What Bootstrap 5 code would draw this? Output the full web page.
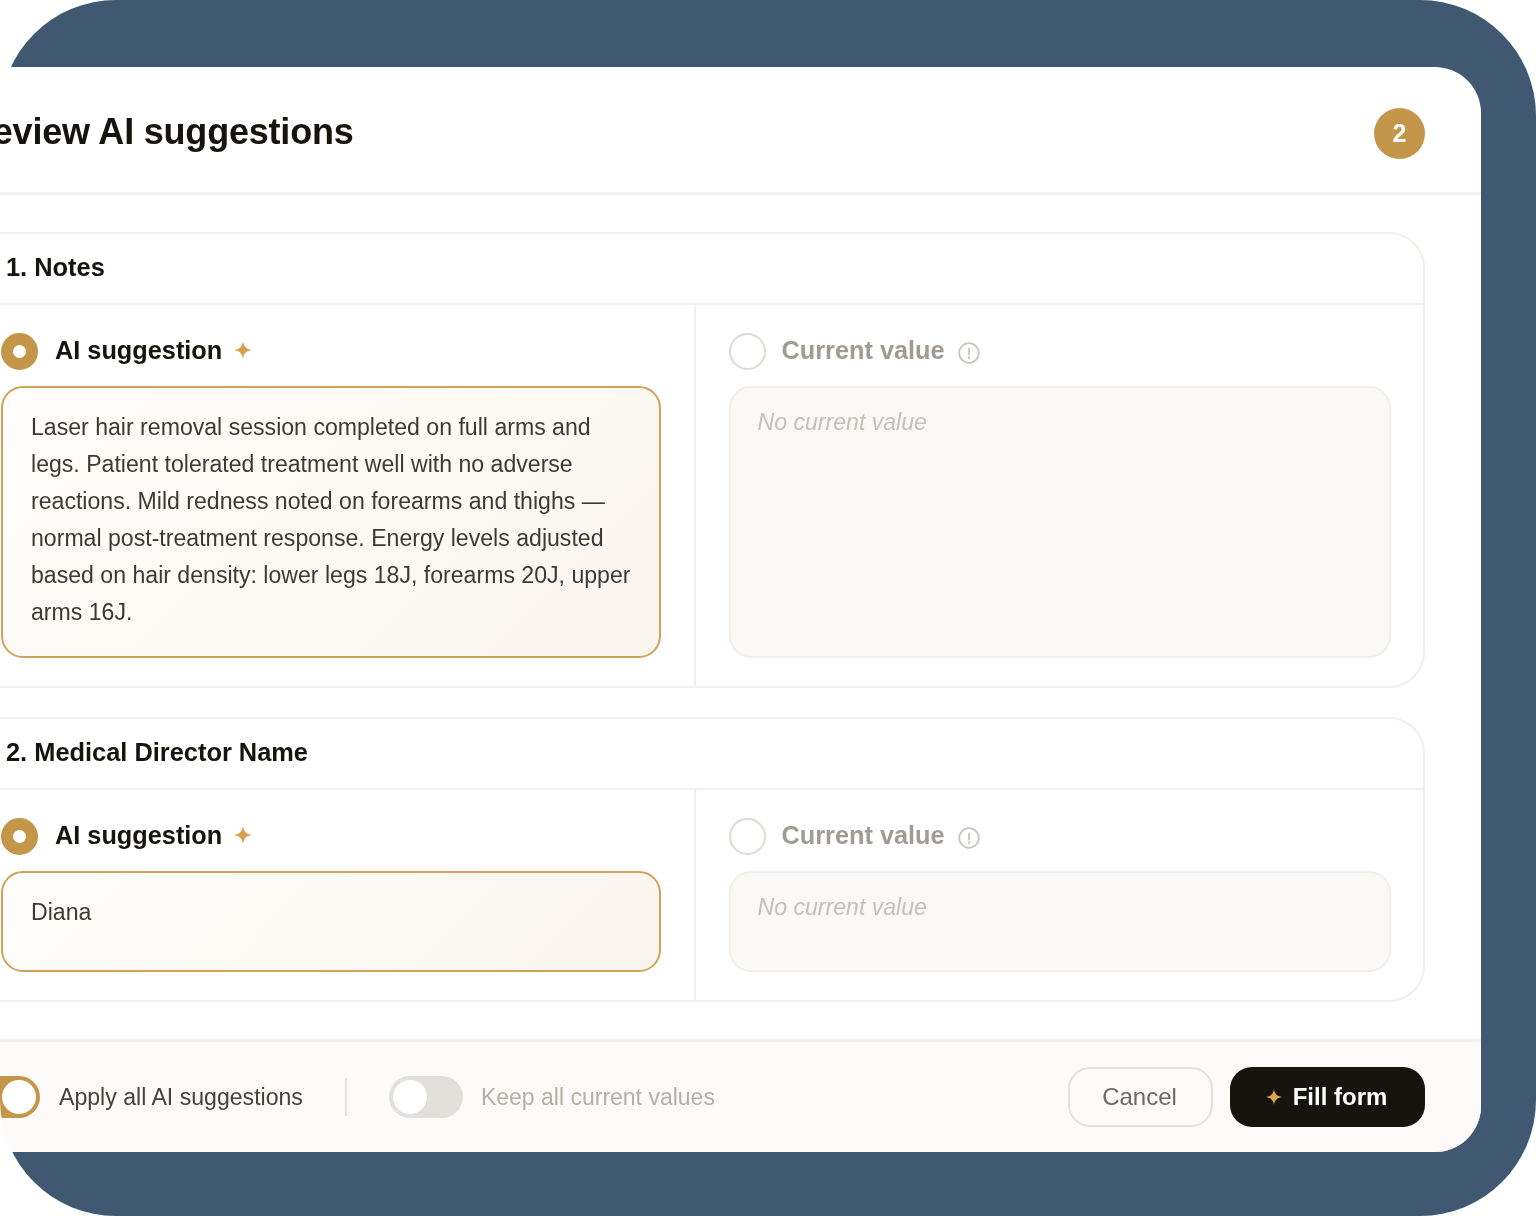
<!DOCTYPE html>
<html lang="en">
<head>
<meta charset="utf-8">
<title>Review AI suggestions</title>
<link href="https://cdn.jsdelivr.net/npm/bootstrap@5.3.0/dist/css/bootstrap.min.css" rel="stylesheet">
<style>
html,body{margin:0;background:#fff;overflow:hidden}
body{font-family:"Liberation Sans",Arial,sans-serif;color:#16140d}
.frame{width:1536px;height:1216px;background:#405872;clip-path:inset(0 round 116px);filter:blur(.55px);padding-top:67px}
.sheet{width:1571px;height:1085px;margin-left:-90px;background:#fff;border-radius:0 46px 46px 0;overflow:hidden;display:flex;flex-direction:column}
.sheet-head{height:128px;padding:0 56px;border-bottom:3px solid #f3f0eb}
.sheet-title{font-size:36px;font-weight:700;letter-spacing:-.2px;margin:4px 0 0 1px;color:#16140d;line-height:1}
.count{width:51px;height:51px;background:#c4964a;color:#fff;font-size:25px;font-weight:700;margin-top:8px}
.sheet-body{padding:37px 56px 0;gap:29px;flex:1 1 auto}
.sect{border:2.5px solid #f2efea;border-radius:36px;overflow:hidden;--bs-card-bg:#fff}
.sect-head{height:71px;padding:0 38px 2px;background:#fff;border-bottom:2.5px solid #f2efea;font-size:25.4px;font-weight:700}
.pane-a{flex:0 0 726px;width:726px;padding:28px 33px}
.pane-b{flex:1 1 0;padding:28px 32px 28px 32.5px;border-left:2.5px solid #f2efea}
.pick{height:37px;gap:17px;margin-bottom:16px;font-size:25.3px;font-weight:700}
.pick-off{gap:16px}
.pick-text{margin-top:-2px}
.dot{width:37px;height:37px;border-radius:50%;flex:none}
.dot-on{border:12.5px solid #c4964a;background:#fff}
.dot-off{border:2.5px solid #dedbd4;background:#fff}
.muted-label{color:#a09c94}
.spark{width:18px;height:18px;margin-left:-5px;margin-top:-3px;flex:none}
.tip{width:22px;height:22px;flex:none;margin-left:-3px;margin-top:2px}
.val{border-radius:22px;padding:21px 21px 20px 28px;font-size:23.1px;line-height:36.9px;color:#3d3a35}
.val-ai{border:2.5px solid #d1a25c;background:linear-gradient(135deg,#fefdfb,#faf6ee)}
.val-none{border:2.5px solid #f2efea;background:#faf9f7;color:#c4c1bb;font-style:italic;padding-top:16px;padding-left:27px}
.h-tall{height:272px}
.h-short{height:101px}
.sheet-foot{height:113px;flex:none;background:#fcfbf9;border-top:3px solid #f3f0eb;padding:0 56px}
.tog{width:74px;height:42px;border-radius:21px;flex:none;padding:4px}
.tog-on{background:#c4964a;justify-content:flex-end}
.tog-off{background:#e2e0da}
.knob{width:34px;height:34px;border-radius:50%;background:#fff;display:block}
.tog-lbl{font-size:23.1px;color:#45423c;margin-left:19px}
.tog-lbl-off{color:#b3b0a9;margin-left:18px;font-size:23px}
.vbar{width:2px;height:38px;background:#e4e1db;margin:0 42px 0 42px}
.act-row{gap:17px}
.act{height:60px;border-radius:22px;font-size:24px;padding:0;line-height:1}
.act-ghost{width:145px;background:transparent;border:2.5px solid #e4e1da;color:#6c6a63;padding-right:2px}
.act-fill{width:195px;background:#16140d;border:0;color:#fff;font-weight:700;gap:11px;padding-right:2px}
.act-fill svg{width:16px;height:16px}
</style>
</head>
<body>
<div class="frame">
  <div class="sheet">
    <div class="sheet-head d-flex align-items-center justify-content-between flex-shrink-0">
      <h1 class="sheet-title">Review AI suggestions</h1>
      <span class="count rounded-circle d-flex align-items-center justify-content-center">2</span>
    </div>
    <div class="sheet-body d-flex flex-column">
      <div class="card sect">
        <div class="sect-head d-flex align-items-center">1. Notes</div>
        <div class="d-flex">
          <div class="pane-a">
            <div class="pick d-flex align-items-center"><span class="dot dot-on"></span><span class="pick-text">AI suggestion</span>
              <svg class="spark" viewBox="0 0 20 20"><path fill="#d6a14e" d="M10 0c.9 6 3.600 9 10 10-6.400 1-9.100 4-10 10-.9-6-3.600-9-10-10 6.400-1 9.100-4 10-10z"/></svg></div>
            <div class="val val-ai h-tall">Laser hair removal session completed on full arms and legs. Patient tolerated treatment well with no adverse reactions. Mild redness noted on forearms and thighs — normal post-treatment response. Energy levels adjusted based on hair density: lower legs 18J, forearms 20J, upper arms 16J.</div>
          </div>
          <div class="pane-b">
            <div class="pick pick-off d-flex align-items-center"><span class="dot dot-off"></span><span class="muted-label pick-text">Current value</span>
              <svg class="tip" viewBox="0 0 22 22" fill="none" stroke="#c9c6bf" stroke-width="1.800"><circle cx="11" cy="11" r="9.800"/><path d="M11 6.500v6M11 15v1.200" stroke-linecap="round"/></svg></div>
            <div class="val val-none h-tall">No current value</div>
          </div>
        </div>
      </div>
      <div class="card sect">
        <div class="sect-head d-flex align-items-center">2. Medical Director Name</div>
        <div class="d-flex">
          <div class="pane-a">
            <div class="pick d-flex align-items-center"><span class="dot dot-on"></span><span class="pick-text">AI suggestion</span>
              <svg class="spark" viewBox="0 0 20 20"><path fill="#d6a14e" d="M10 0c.9 6 3.600 9 10 10-6.400 1-9.100 4-10 10-.9-6-3.600-9-10-10 6.400-1 9.100-4 10-10z"/></svg></div>
            <div class="val val-ai h-short">Diana</div>
          </div>
          <div class="pane-b">
            <div class="pick pick-off d-flex align-items-center"><span class="dot dot-off"></span><span class="muted-label pick-text">Current value</span>
              <svg class="tip" viewBox="0 0 22 22" fill="none" stroke="#c9c6bf" stroke-width="1.800"><circle cx="11" cy="11" r="9.800"/><path d="M11 6.500v6M11 15v1.200" stroke-linecap="round"/></svg></div>
            <div class="val val-none h-short">No current value</div>
          </div>
        </div>
      </div>
    </div>
    <div class="sheet-foot d-flex align-items-center">
      <span class="tog tog-on d-flex"><span class="knob"></span></span>
      <span class="tog-lbl">Apply all AI suggestions</span>
      <span class="vbar"></span>
      <span class="tog tog-off d-flex"><span class="knob"></span></span>
      <span class="tog-lbl tog-lbl-off">Keep all current values</span>
      <div class="ms-auto d-flex act-row">
        <button type="button" class="btn act act-ghost">Cancel</button>
        <button type="button" class="btn act act-fill d-flex align-items-center justify-content-center"><svg viewBox="0 0 20 20"><path fill="#d9a54f" d="M10 0c.9 6 3.600 9 10 10-6.400 1-9.100 4-10 10-.9-6-3.600-9-10-10 6.400-1 9.100-4 10-10z"/></svg>Fill form</button>
      </div>
    </div>
  </div>
</div>
<script src="https://cdn.jsdelivr.net/npm/bootstrap@5.3.0/dist/js/bootstrap.bundle.min.js"></script>
</body>
</html>
